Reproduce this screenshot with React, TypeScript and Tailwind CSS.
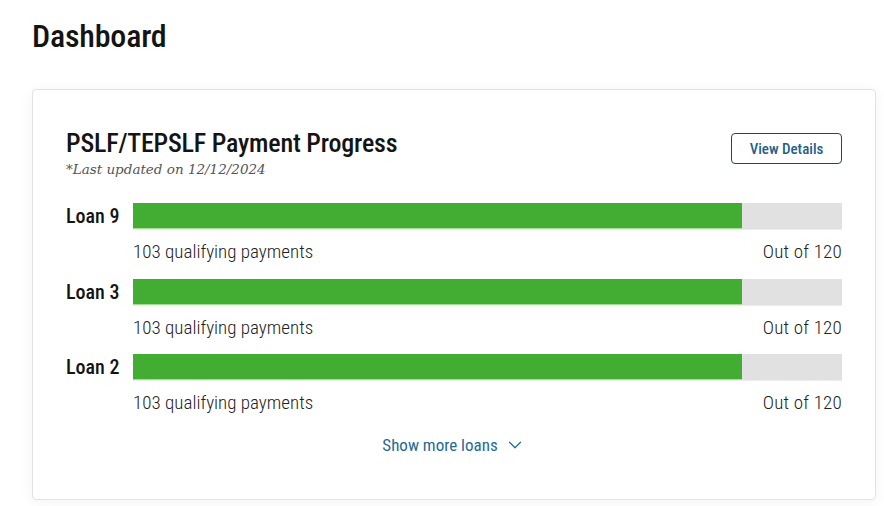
import React from 'react';
import { ChevronDown } from 'lucide-react';

const loans = [
  { name: 'Loan 9', paid: 103, total: 120 },
  { name: 'Loan 3', paid: 103, total: 120 },
  { name: 'Loan 2', paid: 103, total: 120 },
];

export default function App() {
  return (
    <div className="min-h-[506px] w-full bg-white pt-[16px] pl-8 pr-2 font-['Roboto_Condensed','Liberation_Sans',sans-serif] text-[#141414]">
      <h1 className="text-[32px] leading-[40px] font-medium tracking-[-0.2px]">Dashboard</h1>

      {/* Progress card */}
      <div className="mt-[33px] w-[844px] rounded border border-[#e3e3e6] bg-white shadow-[0_2px_14px_rgba(0,0,0,0.05)] px-[33px] pt-[37px] pb-[42px]">
        <div className="flex items-start justify-between">
          <div>
            <h2 className="text-[26px] leading-[32px] font-medium tracking-[-0.2px]">PSLF/TEPSLF Payment Progress</h2>
            <p className="text-[13.5px] leading-[20px] italic text-[#555] font-['DejaVu_Serif',serif]">*Last updated on 12/12/2024</p>
          </div>
          <button className="mt-[6px] h-[31px] w-[111px] rounded border border-[#1e4763] pt-[2px] text-[15px] font-medium text-[#1f5f8b]">
            View Details
          </button>
        </div>

        <div className="mt-[24px] flex flex-col gap-[14.5px]">
          {loans.map((loan) => (
            <div key={loan.name} className="grid grid-cols-[67px_1fr]">
              <div className="text-[20px] leading-[27px] font-medium">{loan.name}</div>
              <div>
                <div className="h-[27px] bg-[#e1e1e1] border-b border-[#ececec]">
                  <div
                    className="h-full bg-[#42ad32] border-b border-[#a5dc98]"
                    style={{ width: `${(loan.paid / loan.total) * 100}%` }}
                  />
                </div>
                <div className="mt-[10px] flex justify-between text-[19px] leading-[24px] font-light text-[#222]">
                  <span>{loan.paid} qualifying payments</span>
                  <span className="tracking-[0.2px]">Out of {loan.total}</span>
                </div>
              </div>
            </div>
          ))}
        </div>

        <div className="mt-[18px] flex justify-center">
          <button className="flex items-center gap-[6px] text-[17px] leading-[24px] text-[#1f6a96]">
            Show more loans
            <ChevronDown className="h-[22px] w-[22px]" strokeWidth={1.3} />
          </button>
        </div>
      </div>
    </div>
  );
}
